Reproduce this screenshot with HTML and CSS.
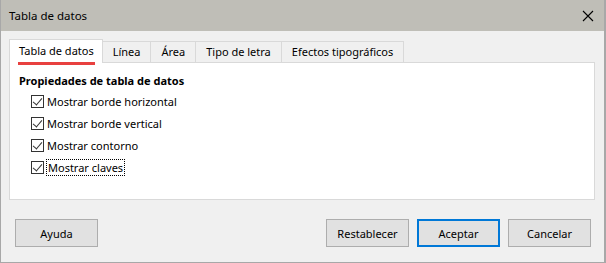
FILE: index.html
```html
<!DOCTYPE html>
<html>
	<head>
		<meta charset="utf-8">
		<title>Tabla de datos</title>
		<link rel="stylesheet" href="styles.css">
	</head>
	<body>
		<div class="dialog">
			<div class="titlebar">
				<span class="caption">Tabla de datos</span>
				<svg class="close" width="12" height="12" viewBox="0 0 12 12"><path d="M1 1L11 11M11 1L1 11" stroke="#000" stroke-width="1.1"/></svg>
			</div>
			<div class="body">
				<ul class="tabs">
					<li class="tab active"><span>Tabla de datos</span></li>
					<li class="tab">Línea</li>
					<li class="tab">Área</li>
					<li class="tab">Tipo de letra</li>
					<li class="tab">Efectos tipográficos</li>
				</ul>
				<div class="panel">
					<div class="heading">Propiedades de tabla de datos</div>
					<label class="check"><span class="box"></span>Mostrar borde horizontal</label>
					<label class="check"><span class="box"></span>Mostrar borde vertical</label>
					<label class="check"><span class="box"></span>Mostrar contorno</label>
					<label class="check"><span class="box"></span><span class="focus">Mostrar claves</span></label>
				</div>
				<div class="buttons">
					<button class="btn">Ayuda</button>
					<div class="right">
						<button class="btn">Restablecer</button>
						<button class="btn default">Aceptar</button>
						<button class="btn">Cancelar</button>
					</div>
				</div>
			</div>
		</div>
	</body>
</html>
```
FILE: styles.css
```css
* {margin: 0;padding: 0;box-sizing: border-box;list-style: none;}
html,body {width: 606px;height: 263px;overflow: hidden;background: #fff;}
body {font-family: "Noto Sans", "Liberation Sans", sans-serif;font-size: 11px;color: #000;}
.dialog {width: 606px;height: 263px;display: flex;flex-direction: column;border: 1px solid #a8a8a8;border-top: 0;border-right-width: 2px;}
.titlebar {height: 31px;flex: none;background: #bfbeb7;display: flex;align-items: center;justify-content: space-between;padding: 0 10px 0 8px;}
.caption {font-size: 11.5px;}
.close {display: block;}
.body {flex: 1;background: #f0f0f0;padding: 8px 8px 0 8px;display: flex;flex-direction: column;}
.tabs {display: flex;align-items: flex-end;height: 23px;position: relative;z-index: 1;}
.tab {height: 21px;line-height: 19px;padding: 0 10px;border: 1px solid #d9d9d9;border-bottom: 0;border-left: 0;background: #f0f0f0;}
.tab.active {height: 24px;margin-bottom: -1px;background: #fff;border-left: 1px solid #d9d9d9;padding: 0 7px 0 8px;line-height: 21px;position: relative;}
.tab.active span {display: inline-block;border-bottom: 3px solid #e8403f;line-height: 18px;padding: 0 1px 2px;}
.panel {height: 138px;margin-right: 1px;background: #fff;border: 1px solid #d9d9d9;padding: 9px 9px 0 9px;}
.heading {font-weight: bold;font-size: 11px;height: 17px;line-height: 17px;margin-bottom: 1px;}
.check {display: flex;align-items: center;height: 22px;padding-left: 12px;}
.box {width: 13px;height: 13px;border: 1px solid #333;margin-right: 3px;position: relative;flex: none;}
.box::after {content: "";position: absolute;left: 3px;top: 0px;width: 4px;height: 8px;border: solid #333;border-width: 0 1px 1px 0;transform: rotate(40deg);}
.focus {outline: 1px dotted #000;padding: 0 1px;line-height: 15px;}
.buttons {display: flex;justify-content: space-between;padding: 19px 5px 0 6px;}
.right {display: flex;gap: 8px;}
.btn {width: 83px;height: 28px;font: inherit;background: #e1e1e1;border: 1px solid #adadad;color: #000;}
.btn.default {border: 2px solid #0078d7;}
```
